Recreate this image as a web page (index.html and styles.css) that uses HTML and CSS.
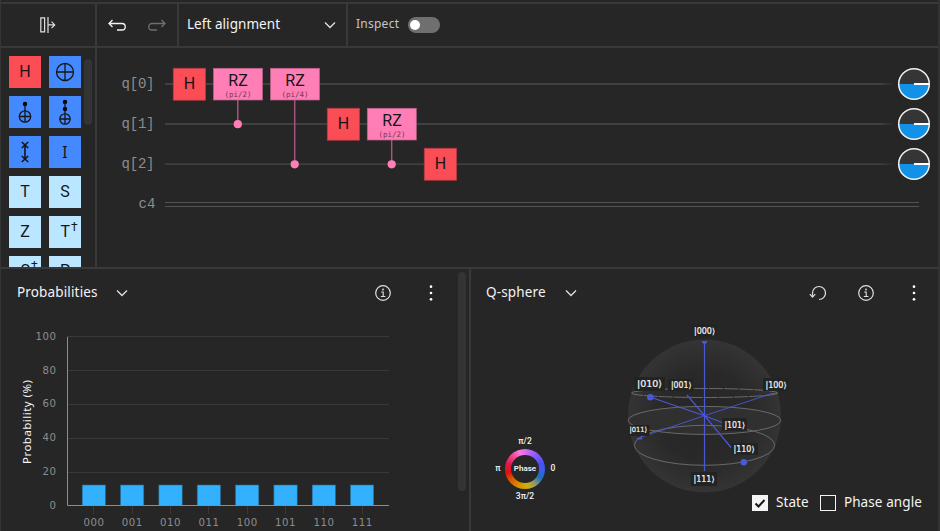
FILE: index.html
```html
<!DOCTYPE html>
<html lang="en">
<head>
<meta charset="utf-8">
<title>Circuit composer</title>
<link rel="stylesheet" href="styles.css">
</head>
<body>
<div class="app">
  <header class="toolbar">
    <div class="tool collapse">
      <svg width="18" height="18" viewBox="0 0 18 18" fill="none" stroke="#e0e0e0" stroke-width="1.2"><path d="M1.8 1.8h3.8v14H1.8zM9 1v16M9 8.9h6.500M12.500 5.600l3.200 3.300-3.200 3.300"/></svg>
    </div>
    <div class="tool history">
      <svg width="20" height="16" viewBox="0 0 20 16" fill="none" stroke="#f4f4f4" stroke-width="1.3"><path d="M5.500 3L2 6.500l3.500 3.500M2 6.500h13a3.200 3.200 0 0 1 0 6.500H10"/></svg>
      <svg width="20" height="16" viewBox="0 0 20 16" fill="none" stroke="#6f6f6f" stroke-width="1.3"><path d="M14.500 3L18 6.500l-3.500 3.500M18 6.500H5a3.200 3.200 0 0 0 0 6.500h5"/></svg>
    </div>
    <div class="tool select">
      <span class="select-text">Left alignment</span>
      <svg class="chevron" width="12" height="8" viewBox="0 0 12 8"><path d="M1 1.500l5 5 5-5"/></svg>
    </div>
    <div class="tool inspect"><span class="inspect-text">Inspect</span><span class="toggle"></span></div>
  </header>

  <section class="composer">
    <aside class="palette">
      <div class="gates">
        <div class="gate red">H</div>
        <div class="gate blue"><svg width="32" height="32" viewBox="0 0 32 32"><circle cx="16" cy="16" r="8.500"/><path d="M16 7.500v17M7.500 16h17"/></svg></div>
        <div class="gate blue"><svg width="32" height="32" viewBox="0 0 32 32"><circle class="dot" cx="16" cy="8" r="2.200"/><circle cx="16" cy="20.500" r="5.700"/><path d="M16 8v18M10.300 20.500h11.400"/></svg></div>
        <div class="gate blue"><svg width="32" height="32" viewBox="0 0 32 32"><circle class="dot" cx="16" cy="6" r="2.200"/><circle class="dot" cx="16" cy="13" r="2.200"/><circle cx="16" cy="23" r="5.200"/><path d="M16 6v22M10.800 23h10.400"/></svg></div>
        <div class="gate blue"><svg width="32" height="32" viewBox="0 0 32 32"><path d="M16 9v14M12.800 6l6.400 6M19.200 6l-6.400 6M12.800 20l6.400 6M19.200 20l-6.400 6" stroke-width="1.600"/></svg></div>
        <div class="gate blue serifed">I</div>
        <div class="gate sky">T</div>
        <div class="gate sky">S</div>
        <div class="gate sky">Z</div>
        <div class="gate sky">T<sup>†</sup></div>
        <div class="gate sky low">S<sup>†</sup></div>
        <div class="gate sky low">P</div>
      </div>
      <div class="palette-scroll"></div>
    </aside>
    <svg class="circuit" width="841" height="219" viewBox="97 48 841 219">
      <defs>
        <linearGradient id="wire" gradientUnits="userSpaceOnUse" x1="165" y1="0" x2="895" y2="0"><stop offset="0.980" stop-color="#484848"/><stop offset="1" stop-color="#262626"/></linearGradient>
      </defs>
      <g class="labels">
        <text x="121.500" y="88" textLength="33">q[0]</text>
        <text x="121.500" y="128" textLength="33">q[1]</text>
        <text x="121.500" y="168" textLength="33">q[2]</text>
        <text x="138.500" y="208" textLength="17">c4</text>
      </g>
      <g fill="url(#wire)">
        <rect x="165" y="83.250" width="730" height="1.500"/>
        <rect x="165" y="123.250" width="730" height="1.500"/>
        <rect x="165" y="163.500" width="730" height="1.200"/>
      </g>
      <path d="M165 202.500h754M165 206.500h754" stroke="#525252"/>
      <path d="M237.800 100v24M294.700 100v64M391.700 140v24" stroke="#a3567a" stroke-width="1.500"/>
      <g fill="#ff7eb6">
        <circle cx="237.800" cy="124.200" r="4.100"/><circle cx="294.700" cy="164.300" r="4.100"/><circle cx="391.700" cy="164.300" r="4.100"/>
        <g stroke="#bd6089" stroke-width=".7">
          <rect x="213.500" y="68.300" width="49" height="31.700"/><rect x="270.500" y="68.300" width="49" height="31.700"/><rect x="367.300" y="108.300" width="49" height="31.700"/>
        </g>
      </g>
      <g fill="#fa4d56" stroke="#b63c43" stroke-width=".8">
        <rect x="173.300" y="68.300" width="32.200" height="31.900"/><rect x="327.300" y="108.300" width="32.200" height="31.900"/><rect x="424.300" y="148.300" width="32.200" height="31.900"/>
      </g>
      <g class="gate-name">
        <text x="189.500" y="89">H</text><text x="343.500" y="129">H</text><text x="440.500" y="169">H</text>
        <text x="238" y="86">RZ</text><text x="295" y="86">RZ</text><text x="392" y="126">RZ</text>
      </g>
      <g class="gate-param">
        <text x="224.500" y="97" textLength="27">(pi/2)</text><text x="281.500" y="97" textLength="27">(pi/4)</text><text x="378.500" y="137" textLength="27">(pi/2)</text>
      </g>
      <g id="disks">
        <g><circle cx="914" cy="84" r="15.300" fill="#353535"/><path d="M898.700 84a15.300 15.300 0 0 0 30.600 0z" fill="#1192e8"/><path d="M914 84h15" stroke="#fff" stroke-width="2"/><circle cx="914" cy="84" r="15.300" fill="none" stroke="#f4f4f4" stroke-width="1.500"/></g>
        <g><circle cx="914" cy="124" r="15.300" fill="#353535"/><path d="M898.700 124a15.300 15.300 0 0 0 30.600 0z" fill="#1192e8"/><path d="M914 124h15" stroke="#fff" stroke-width="2"/><circle cx="914" cy="124" r="15.300" fill="none" stroke="#f4f4f4" stroke-width="1.500"/></g>
        <g><circle cx="914" cy="164" r="15.300" fill="#353535"/><path d="M898.700 164a15.300 15.300 0 0 0 30.600 0z" fill="#1192e8"/><path d="M914 164h15" stroke="#fff" stroke-width="2"/><circle cx="914" cy="164" r="15.300" fill="none" stroke="#f4f4f4" stroke-width="1.500"/></g>
      </g>
    </svg>
  </section>

  <section class="panels">
    <div class="panel prob">
      <div class="prob-main">
        <div class="panel-head">
          <span class="title title-prob">Probabilities</span>
          <svg class="chevron" width="12" height="8" viewBox="0 0 12 8"><path d="M1 1.500l5 5 5-5"/></svg>
          <div class="actions">
            <svg width="16" height="16" viewBox="0 0 16 16" fill="none" stroke="#e0e0e0"><circle cx="8" cy="8" r="7.300" stroke-width="1.200"/><path d="M6.200 7h2v4.500M5.800 11.500h4.600" stroke-width="1.100"/><circle cx="8" cy="4.500" r=".9" fill="#e0e0e0" stroke="none"/></svg>
            <svg width="16" height="16" viewBox="0 0 16 16" fill="#fff"><circle cx="8" cy="1.700" r="1.350"/><circle cx="8" cy="8" r="1.350"/><circle cx="8" cy="14.300" r="1.350"/></svg>
          </div>
        </div>
        <svg class="chart" width="457" height="214" viewBox="1 317 457 214">
          <path d="M67 336.500h322M67 370.500h322M67 404.500h322M67 438.500h322M67 472.500h322" stroke="#393939"/>
          <path d="M93.500 506v8M132.500 506v8M170.500 506v8M208.500 506v8M247.500 506v8M285.500 506v8M323.500 506v8M362.500 506v8" stroke="#393939"/>
          <g fill="#33b1ff" stroke="#25688f" stroke-width=".6">
            <rect x="82.200" y="485" width="23.300" height="20.500"/><rect x="120.500" y="485" width="23.300" height="20.500"/><rect x="158.900" y="485" width="23.300" height="20.500"/><rect x="197.200" y="485" width="23.300" height="20.500"/><rect x="235.500" y="485" width="23.300" height="20.500"/><rect x="273.900" y="485" width="23.300" height="20.500"/><rect x="312.200" y="485" width="23.300" height="20.500"/><rect x="350.400" y="485" width="23.300" height="20.500"/>
          </g>
          <path d="M67.500 337v168.500H389" fill="none" stroke="#8d8d8d"/>
          <g class="tick">
            <text x="35.500" y="340" textLength="20.500">100</text><text x="42.500" y="374" textLength="13.500">80</text><text x="42.500" y="407" textLength="13.500">60</text><text x="42.500" y="441" textLength="13.500">40</text><text x="42.500" y="475" textLength="13.500">20</text><text x="49.500" y="509">0</text>
            <text x="83.500" y="526" textLength="20.500">000</text><text x="121.800" y="526" textLength="20.500">001</text><text x="160" y="526" textLength="20.500">010</text><text x="198.500" y="526" textLength="20.500">011</text><text x="236.800" y="526" textLength="20.500">100</text><text x="275" y="526" textLength="20.500">101</text><text x="313.500" y="526" textLength="20.500">110</text><text x="351.800" y="526" textLength="20.500">111</text>
          </g>
          <text class="axis" transform="translate(30.500 464) rotate(-90)" textLength="84">Probability (%)</text>
        </svg>
      </div>
      <div class="prob-scroll"></div>
    </div>

    <div class="panel sphere">
      <div class="panel-head">
        <span class="title title-sphere">Q-sphere</span>
        <svg class="chevron" width="12" height="8" viewBox="0 0 12 8"><path d="M1 1.500l5 5 5-5"/></svg>
        <div class="actions">
          <svg width="18" height="16" viewBox="0 0 18 16" fill="none" stroke="#e0e0e0" stroke-width="1.200"><path d="M4.500 10.700V8A6.500 6.500 0 1 1 11 14.500M1.800 9.200l2.700 3 2.700-3"/></svg>
          <svg width="16" height="16" viewBox="0 0 16 16" fill="none" stroke="#e0e0e0"><circle cx="8" cy="8" r="7.300" stroke-width="1.200"/><path d="M6.200 7h2v4.500M5.800 11.500h4.600" stroke-width="1.100"/><circle cx="8" cy="4.500" r=".9" fill="#e0e0e0" stroke="none"/></svg>
          <svg width="16" height="16" viewBox="0 0 16 16" fill="#fff"><circle cx="8" cy="1.700" r="1.350"/><circle cx="8" cy="8" r="1.350"/><circle cx="8" cy="14.300" r="1.350"/></svg>
        </div>
      </div>
      <div class="scene">
        <div class="phase">
          <span class="top">π/2</span>
          <span class="left">π</span>
          <div class="ring"><div class="hole">Phase</div></div>
          <span class="right">0</span>
          <span class="bottom">3π/2</span>
        </div>
        <svg class="ball" width="200" height="176" viewBox="605 317 200 176">
          <defs><radialGradient id="ball"><stop offset="0" stop-color="#262626"/><stop offset=".6" stop-color="#292929"/><stop offset="1" stop-color="#343434"/></radialGradient></defs>
          <circle cx="704.500" cy="416" r="76.500" fill="url(#ball)"/>
          <ellipse cx="704.500" cy="420.400" rx="76.300" ry="14" fill="#303030"/>
          <g fill="none" stroke="#707070" stroke-width=".9">
            <ellipse cx="704.500" cy="393" rx="73" ry="4.500" stroke-dasharray="14 1"/>
            <ellipse cx="704.500" cy="420.400" rx="76.300" ry="14"/>
            <ellipse cx="704.500" cy="445.300" rx="70.200" ry="20"/>
          </g>
          <g stroke="#4a58d8" stroke-width="1.200" fill="none">
            <path d="M704.500 342v129M704.500 415.700L650 397M704.500 415.700L687 395M704.500 415.700L731 447.500M704.500 415.700L722 422.500"/>
            <path d="M704.500 415.700L772 393.500h6M704.500 415.700L640 437.500" stroke-width=".9"/>
          </g>
          <g fill="#4a58d8"><path d="M701.500 341h6l-1.500 2.800h-3zM636.500 438h6l-1 1.600h-4z"/><circle cx="650.300" cy="397.300" r="3.300"/><circle cx="743.800" cy="462.300" r="3.300"/></g>
          <g fill="#232323">
            <rect x="692" y="324" width="25" height="13"/><rect x="634" y="377" width="31" height="14"/><rect x="668" y="379" width="25" height="12"/><rect x="763" y="378" width="26" height="13"/><rect x="628.500" y="425" width="21" height="11"/><rect x="722" y="418" width="25" height="13"/><rect x="732" y="443" width="26" height="12"/><rect x="691" y="472" width="26" height="14"/>
          </g>
          <g class="ket">
            <text x="694" y="334" textLength="21" lengthAdjust="spacingAndGlyphs">|000⟩</text><text class="ket-l" x="637" y="387.200" textLength="25" lengthAdjust="spacingAndGlyphs">|010⟩</text><text x="671" y="388" textLength="20.500" lengthAdjust="spacingAndGlyphs">|001⟩</text><text x="765.500" y="387.500" textLength="21" lengthAdjust="spacingAndGlyphs">|100⟩</text><text class="ket-s" x="629.500" y="432" textLength="17.500" lengthAdjust="spacingAndGlyphs">|011⟩</text><text x="724.500" y="427.500" textLength="20.500" lengthAdjust="spacingAndGlyphs">|101⟩</text><text x="733.500" y="452" textLength="21" lengthAdjust="spacingAndGlyphs">|110⟩</text><text x="693.500" y="481.500" textLength="21" lengthAdjust="spacingAndGlyphs">|111⟩</text>
          </g>
        </svg>
        <div class="options">
          <span class="box checked"><svg width="16" height="16" viewBox="0 0 16 16"><path d="M3.500 8.500l3 3 6-6.500" fill="none" stroke="#161616" stroke-width="2"/></svg></span>
          <span class="opt opt-state">State</span>
          <span class="box"></span>
          <span class="opt">Phase angle</span>
        </div>
      </div>
    </div>
  </section>
</div>
</body>
</html>
```
FILE: styles.css
```css
* { box-sizing: border-box; }
body { margin: 0; background: #262626; color: #f4f4f4; font-family: "Noto Sans", sans-serif; }
svg { display: block; flex: none; }
.app { width: 940px; height: 531px; overflow: hidden; padding-top: 2px; border-left: 1px solid #353535; border-right: 2px solid #333; display: flex; flex-direction: column; }
.toolbar { height: 46px; flex: none; display: flex; border-top: 2px solid #393939; border-bottom: 2px solid #393939; }
.tool { display: flex; align-items: center; border-right: 2px solid #393939; }
.collapse { width: 96px; padding-left: 38px; }
.history { width: 82px; padding-left: 10px; gap: 20px; }
.select { width: 169px; padding: 0 10px 0 8px; justify-content: space-between; }
.select-text { font-size: 13.5px; letter-spacing: .05px; margin-top: -2px; }
.chevron { fill: none; stroke: #e0e0e0; stroke-width: 1.3; }
.inspect { border-right: 0; padding: 0 0 1px 8px; gap: 9px; }
.inspect-text { font-size: 12px; letter-spacing: .25px; color: #c6c6c6; margin-top: -3px; }
.toggle { width: 32px; height: 16px; border-radius: 8px; background: #6f6f6f; padding: 3px 2px; }
.toggle::before { content: ""; display: block; width: 10px; height: 10px; border-radius: 50%; background: #fff; }

.composer { height: 219px; flex: none; display: flex; overflow: hidden; }
.palette { width: 96px; flex: none; display: flex; gap: 3px; padding: 8px 0 0 8px; border-right: 2px solid #393939; }
.gates { display: grid; grid-template-columns: 32px 32px; grid-auto-rows: 32px; gap: 8px; }
.gate { display: flex; align-items: center; justify-content: center; font-family: Roboto, sans-serif; font-size: 16px; line-height: 20px; color: #161616; }
.gate svg { fill: none; stroke: #161616; stroke-width: 1.3; }
.gate svg .dot { fill: #000; stroke: none; }
.gate sup { font-size: 12px; line-height: 1; margin: -10px -8px 0 1px; }
.serifed { font-family: "Noto Sans", sans-serif; font-size: 15.5px; }
.low { padding-bottom: 2px; }
.red { background: #fa4d56; }
.blue { background: #4589ff; }
.sky { background: #bae6ff; }
.palette-scroll { width: 8px; height: 66px; margin-top: 3px; border-radius: 4px; background: #343434; }
.labels { font-family: "Liberation Mono", monospace; font-size: 14px; fill: #8d8d8d; }
.gate-name { font-family: Roboto, sans-serif; font-size: 16px; fill: #161616; text-anchor: middle; }
.gate-param { font-family: "DejaVu Sans Mono", monospace; font-size: 7.5px; fill: #76364f; }

.panels { flex: 1; display: flex; border-top: 2px solid #393939; min-height: 0; }
.prob { width: 470px; flex: none; display: flex; border-right: 2px solid #393939; }
.prob-main { width: 457px; }
.prob-scroll { width: 8px; height: 219px; margin-top: 3px; border-radius: 4px; background: #343434; }
.panel-head { height: 48px; display: flex; align-items: center; padding-left: 16px; }
.title { font-size: 13.5px; letter-spacing: .15px; margin-top: -2px; }
.title-prob { width: 99px; }
.title-sphere { width: 79px; }
.actions { display: flex; gap: 32px; margin-left: auto; padding-right: 19px; }
.tick { font-family: "DejaVu Sans Condensed", "DejaVu Sans", sans-serif; font-stretch: condensed; font-size: 11.3px; fill: #8d8d8d; }
.axis { font-size: 11.5px; fill: #f4f4f4; }

.sphere { flex: 1; }
.sphere .panel-head { padding-left: 15px; }
.sphere .actions { padding-right: 16px; }
.scene { display: grid; grid-template-columns: 134px 1fr; grid-template-rows: 176px 20px; }
.phase { grid-row: 1 / 3; align-self: end; justify-self: start; margin: 0 0 12.5px 22px; display: grid; grid-template-columns: 10px 40px 12px; grid-template-rows: 9px 40px 9px; gap: 3px 2px; align-items: center; justify-items: center; font-family: Roboto, sans-serif; font-size: 8.5px; line-height: 9px; font-weight: 500; }
.top, .bottom { grid-column: 1 / 4; }
.top, .bottom { transform: translateX(-1px); }
.ring { width: 40px; height: 40px; border-radius: 50%; padding: 6px; background: conic-gradient(from 0deg, #dc70e8, #9a5cff 30deg, #4a50f2 70deg, #3d5bea 95deg, #1d70bc 120deg, #8f9a70 147deg, #d2ae08 172deg, #d88a00 205deg, #d85a00 232deg, #e01010 258deg, #dc1c4c 288deg, #ee4e98 320deg, #ff76e2 342deg, #dc70e8); }
.hole { width: 28px; height: 28px; border-radius: 50%; background: #262626; display: flex; align-items: center; justify-content: center; font-size: 8px; font-weight: 600; }
.ket { font-family: "DejaVu Sans Condensed", "DejaVu Sans", sans-serif; font-stretch: condensed; font-size: 8px; fill: #f4f4f4; stroke: #f4f4f4; stroke-width: .2px; }
.ket-l { font-size: 9.5px; }
.ket-s { font-size: 7px; }
.options { grid-column: 2; display: flex; align-items: center; justify-content: flex-end; padding: 0 16px 1px 0; }
.box { width: 16px; height: 16px; border: 1px solid #f4f4f4; }
.checked { border: 0; background: #f4f4f4; }
.opt { font-size: 13.5px; letter-spacing: .1px; margin-left: 8px; line-height: 18px; white-space: nowrap; margin-top: -1px; }
.opt-state { width: 44px; }
```
